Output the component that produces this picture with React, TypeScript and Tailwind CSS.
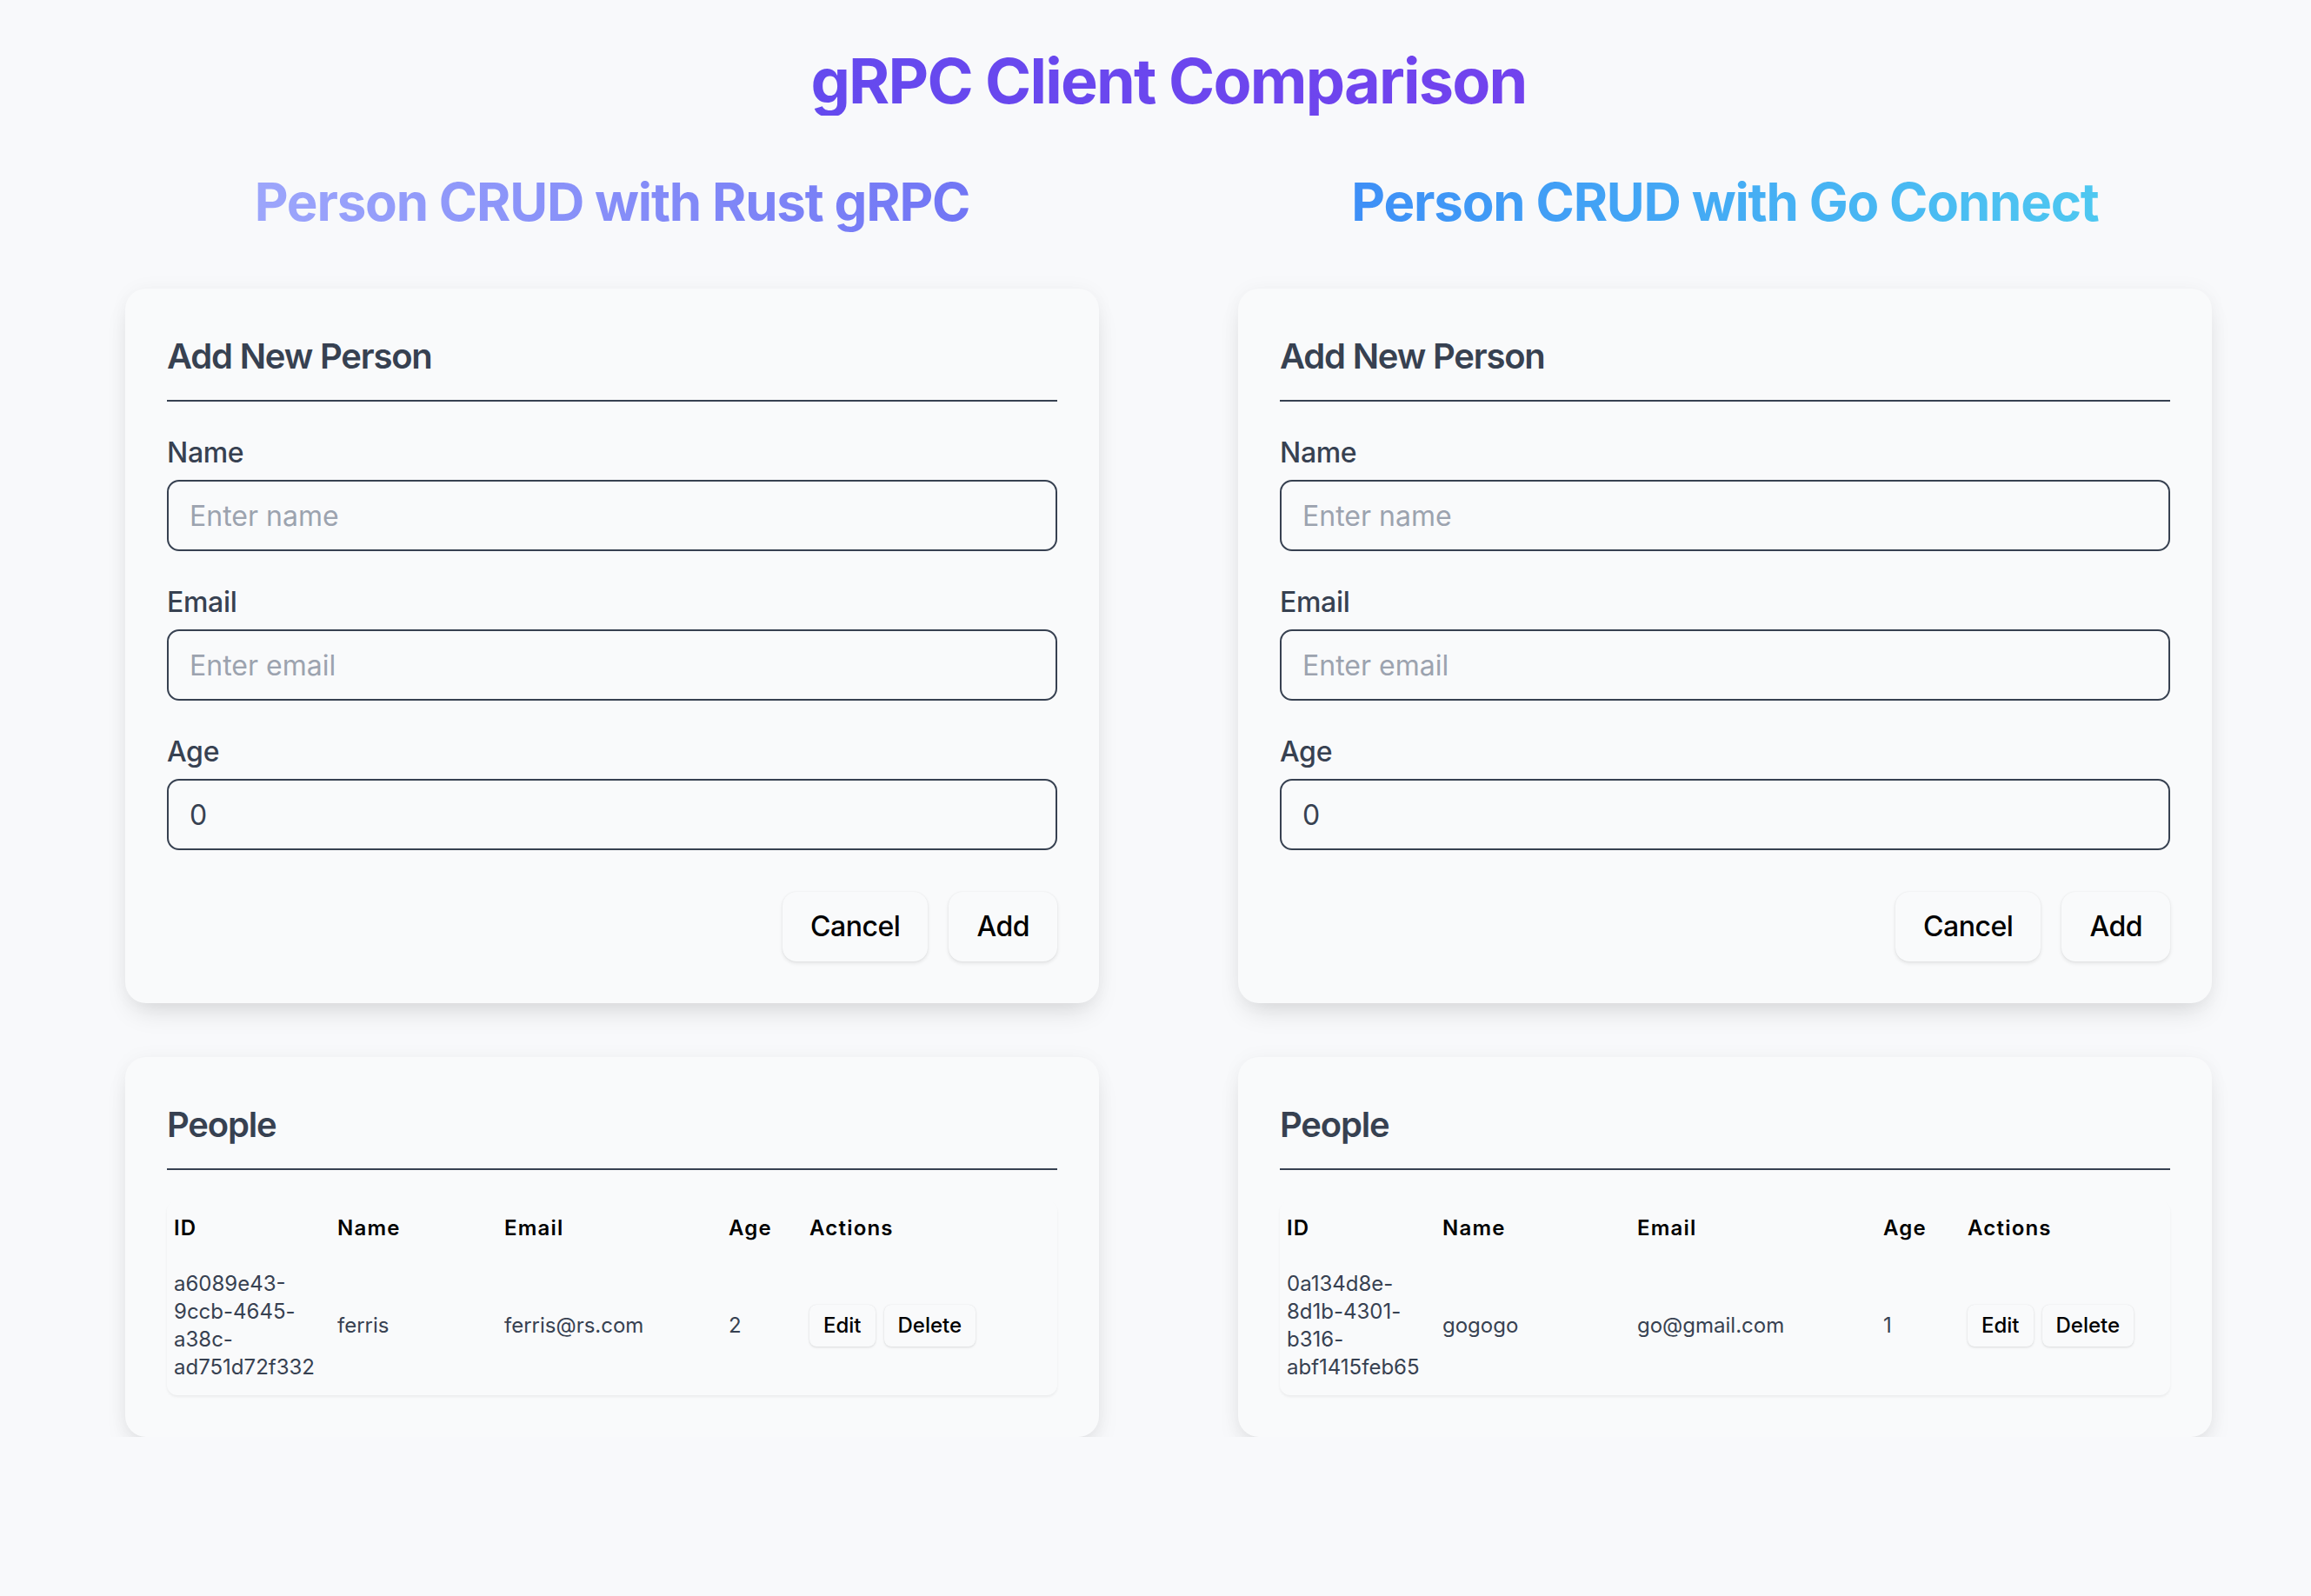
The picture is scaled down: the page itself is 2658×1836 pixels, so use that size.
import React from "react";

type Person = {
  id: string;
  name: string;
  email: string;
  age: number;
};

type PanelProps = {
  title: string;
  titleClass: string;
  person: Person;
  cols: string[];
};

const Field = ({
  label,
  placeholder,
  value,
}: {
  label: string;
  placeholder?: string;
  value?: string;
}) => (
  <div className="mb-[35px]">
    <label className="mb-[7px] block text-[32px] leading-[48px] font-medium tracking-[-0.01em] text-[#374151]">
      {label}
    </label>
    <input
      readOnly
      placeholder={placeholder}
      value={value ?? ""}
      className="block h-[82px] w-full rounded-[14px] border-2 border-[#374151] bg-transparent px-[24px] text-[32px] text-[#374151] outline-none placeholder:text-[#9ca3af]"
    />
  </div>
);

const CardTitle = ({ children }: { children: React.ReactNode }) => (
  <h3 className="mb-[35px] border-b-2 border-[#374151] pb-[20px] text-[40px] leading-[60px] font-semibold tracking-[-0.03em] text-[#374151]">
    {children}
  </h3>
);

const Panel = ({ title, titleClass, person, cols }: PanelProps) => {
  return (
    <section className="flex w-[1120px] flex-col">
      <h2
        className={
          "mb-[64px] bg-gradient-to-r bg-clip-text text-center text-[60px] leading-[72px] font-bold tracking-[-0.02em] text-transparent " +
          titleClass
        }
      >
        <span>{title}</span>
      </h2>

      <div className="rounded-[24px] bg-[#f9fafb] p-[48px] shadow-[0_16px_30px_-8px_rgba(0,0,0,0.13),0_0_22px_rgba(0,0,0,0.04)]">
        <CardTitle>Add New Person</CardTitle>
        <Field label="Name" placeholder="Enter name" />
        <Field label="Email" placeholder="Enter email" />
        <Field label="Age" value="0" />
        {/* margins collapse with the field above, so this is the whole gap */}
        <div className="mt-[48px] flex justify-end gap-[24px]">
          <button className="h-[80px] rounded-[16px] bg-[#f9fafb] px-[32px] text-[32px] font-medium tracking-[-0.015em] text-black shadow-[0_2px_4px_rgba(0,0,0,0.1),0_0_2px_rgba(0,0,0,0.06)]">
            Cancel
          </button>
          <button className="h-[80px] rounded-[16px] bg-[#f9fafb] px-[32px] text-[32px] font-medium tracking-[-0.015em] text-black shadow-[0_2px_4px_rgba(0,0,0,0.1),0_0_2px_rgba(0,0,0,0.06)]">
            Add
          </button>
        </div>
      </div>

      <div className="mt-[62px] rounded-[24px] bg-[#f9fafb] p-[48px] shadow-[0_16px_30px_-8px_rgba(0,0,0,0.13),0_0_22px_rgba(0,0,0,0.04)]">
        <CardTitle>People</CardTitle>
        <div className="mt-[33px] overflow-hidden rounded-[12px] shadow-[0_2px_3px_rgba(0,0,0,0.06)]">
          <table className="w-full table-fixed border-collapse text-left">
            <colgroup>
              {cols.map((c, i) => (
                <col key={i} className={c} />
              ))}
            </colgroup>
            <thead>
              <tr>
                {["ID", "Name", "Email", "Age", "Actions"].map((h) => (
                  <th
                    key={h}
                    className="px-[8px] py-[16px] text-[24px] leading-[32px] font-semibold tracking-wider text-black"
                  >
                    {h}
                  </th>
                ))}
              </tr>
            </thead>
            <tbody>
              <tr className="text-[24px] leading-[32px] text-[#374151]">
                <td className="px-[8px] py-[16px] align-middle">{person.id}</td>
                <td className="px-[8px] py-[16px] align-middle">{person.name}</td>
                <td className="px-[8px] py-[16px] align-middle">{person.email}</td>
                <td className="px-[8px] py-[16px] align-middle">{person.age}</td>
                <td className="px-[8px] py-[16px] align-middle">
                  <div className="flex gap-[10px]">
                    <button className="h-[48px] rounded-[8px] bg-[#f9fafb] px-[16px] text-[24px] font-medium text-black shadow-[0_1px_3px_rgba(0,0,0,0.12),0_0_1px_rgba(0,0,0,0.08)]">
                      Edit
                    </button>
                    <button className="h-[48px] rounded-[8px] bg-[#f9fafb] px-[16px] text-[24px] font-medium text-black shadow-[0_1px_3px_rgba(0,0,0,0.12),0_0_1px_rgba(0,0,0,0.08)]">
                      Delete
                    </button>
                  </div>
                </td>
              </tr>
            </tbody>
          </table>
        </div>
      </div>
    </section>
  );
};

const App = () => {
  return (
    <main className="min-h-screen bg-[#f8f9fb] font-['Inter',sans-serif]">
      <div className="overflow-hidden pl-[144px] pt-[53px]">
        <div className="w-[2400px]">
          <h1 className="mb-[63px] bg-gradient-to-r from-[#5650ef] to-[#7d3aed] bg-clip-text text-center text-[72px] leading-[80px] font-bold tracking-[-0.025em] text-transparent">
            <span className="inline-block">gRPC Client Comparison</span>
          </h1>
          <div className="flex gap-[160px]">
            <Panel
              title="Person CRUD with Rust gRPC"
              titleClass="from-[#a5aefc] to-[#6a6cf3]"
              person={{
                id: "a6089e43-9ccb-4645-a38c-ad751d72f332",
                name: "ferris",
                email: "ferris@rs.com",
                age: 2,
              }}
              cols={["w-[188px]", "w-[192px]", "w-[258px]", "w-[93px]", "w-[293px]"]}
            />
            <Panel
              title="Person CRUD with Go Connect"
              titleClass="from-[#3d86f7] to-[#52d0ef]"
              person={{
                id: "0a134d8e-8d1b-4301-b316-abf1415feb65",
                name: "gogogo",
                email: "go@gmail.com",
                age: 1,
              }}
              cols={["w-[179px]", "w-[224px]", "w-[283px]", "w-[97px]", "w-[241px]"]}
            />
          </div>
        </div>
      </div>
    </main>
  );
};

export default App;
